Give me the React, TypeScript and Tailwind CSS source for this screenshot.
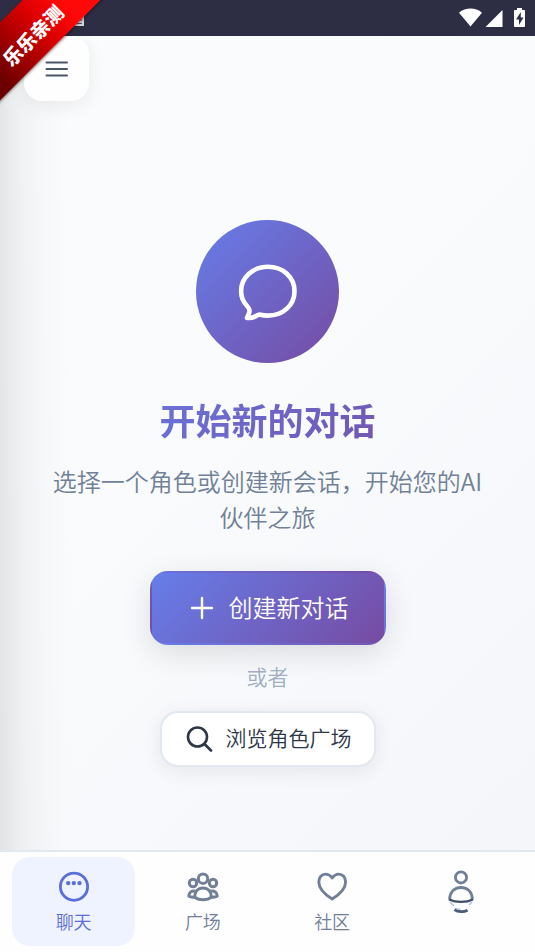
import type { ReactNode } from "react";

interface NavItem {
  label: string;
  icon: ReactNode;
  active?: boolean;
  hideLabel?: boolean;
}

const NAV_ITEMS: NavItem[] = [
  { label: "聊天", icon: <ChatIcon />, active: true },
  { label: "广场", icon: <PeopleIcon /> },
  { label: "社区", icon: <HeartIcon /> },
  { label: "我的", icon: <ProfileIcon />, hideLabel: true },
];

function ChatIcon() {
  return (
    <svg width="32" height="32" viewBox="0 0 32 32" aria-hidden="true">
      <circle cx="16" cy="15.7" r="13.6" fill="none" stroke="currentColor" strokeWidth="2.8" />
      <g fill="currentColor">
        <circle cx="10.2" cy="12.1" r="2.2" />
        <circle cx="15.8" cy="12.1" r="2.2" />
        <circle cx="21.5" cy="12.1" r="2.2" />
      </g>
    </svg>
  );
}

function PeopleIcon() {
  return (
    <svg width="32" height="32" viewBox="0 0 32 32" fill="none" stroke="currentColor" strokeWidth="3" strokeLinejoin="round" aria-hidden="true">
      <circle cx="16" cy="7.7" r="4.7" />
      <circle cx="6" cy="12" r="3.7" />
      <circle cx="26" cy="12" r="3.7" />
      <path d="M7.7 26.2C7.7 20.6 11 16.9 16 16.9s8.3 3.7 8.3 9.3c-2 1.8-5 2.6-8.3 2.6s-6.3-.8-8.3-2.6Z" />
      <path d="M8.6 20.2C4.6 19.2 2 21.5 1.8 25.1c1.7.9 3.7 1.3 5.9 1.3M23.4 20.2c4-1 6.6 1.3 6.8 4.9-1.7.9-3.7 1.3-5.9 1.3" />
    </svg>
  );
}

function HeartIcon() {
  return (
    <svg width="32" height="32" viewBox="0 0 32 32" fill="none" stroke="currentColor" strokeWidth="2.9" strokeLinejoin="round" aria-hidden="true">
      <path d="M16.2 7C14.3 4.2 12 3.1 9.7 3.1 5.7 3.1 2.8 6.4 2.8 11c0 7.2 6.8 12.9 13.4 17C22.8 23.9 29.6 18.2 29.6 11c0-4.6-2.9-7.9-6.9-7.9-2.3 0-4.6 1.1-6.5 3.9Z" />
    </svg>
  );
}

function ProfileIcon() {
  return (
    <svg width="32" height="46" viewBox="0 0 32 46" fill="none" strokeWidth="2.8" aria-hidden="true">
      <circle cx="16" cy="8.4" r="5.6" stroke="currentColor" />
      <path d="M4.6 30.5C4.6 23.5 9 18.5 16 18.5s11.4 5 11.4 12" stroke="currentColor" />
      <path d="M4 30.5c7 3.2 17 3.2 24 0" stroke="#3f4c6b" strokeWidth="2.2" />
      <path d="M5 32.8l4 4.2M27 32.8l-3 3.2" stroke="#b9c6e0" strokeWidth="1.8" />
      <path d="M9.5 40.6c3.5 2.7 9.5 2.7 13 .6" stroke="#4a5a78" strokeWidth="2.8" />
      <path d="M9.5 39.2c1.8.8 3.8 1 6 1" stroke="#9fb3d8" strokeWidth="1" />
    </svg>
  );
}

function StatusBar() {
  return (
    <div className="flex h-9 items-center justify-between bg-[#2d2d44] pr-2 pl-[72px] text-white">
      <svg width="12" height="14" viewBox="0 0 12 14" className="mt-1" aria-hidden="true">
        <path d="M0 1h12v12H0z" fill="#d4d4da" />
        <path d="M2 10.5h8M2 4h8M2 7h8" stroke="#55556a" strokeWidth="1" />
      </svg>
      <svg width="68" height="20" viewBox="0 0 68 20" fill="currentColor" aria-hidden="true">
        <path d="M0 4.8C6.5-.8 16.5-.8 23 4.8L11.5 18.5Z" />
        <path d="M43.5 2v17H26.5Z" />
        <path d="M58 0h5v2h2.2c.5 0 .8.3.8.8v15.4c0 .5-.3.8-.8.8h-9.400c-.5 0-.8-.3-.8-.8V2.8c0-.5.3-.8.8-.8H58Z" />
        <path d="M61.8 4 57 11.500h3v5.500l4.500-7.500h-2.700Z" fill="#2d2d44" />
      </svg>
    </div>
  );
}

// Corner ribbon, lies over the status bar and the menu button
function Ribbon() {
  return (
    <div className="pointer-events-none absolute top-0 left-0 size-[110px] overflow-hidden">
      <div className="absolute top-[3px] -left-[49px] flex h-[55px] w-[160px] -rotate-45 items-center justify-center bg-linear-to-r from-[#6b0000] from-15% via-[#d80000] via-55% to-[#ff0808] to-75% pt-2 pr-1 shadow-[0_1px_3px_rgba(0,0,0,0.5)]">
        <span className="text-[19px] leading-3 font-black text-white">乐乐亲测</span>
      </div>
    </div>
  );
}

function BottomNav() {
  return (
    <nav className="grid grid-cols-4 gap-1.5 border-t-2 border-[#e2e8f0] bg-[#fefefe] px-3 pt-[5px] pb-1.5">
      {NAV_ITEMS.map((item) => (
        <button
          key={item.label}
          type="button"
          aria-label={item.label}
          aria-current={item.active ? "page" : undefined}
          className={`flex h-[89px] flex-col items-center gap-1.5 rounded-[18px] ${item.hideLabel ? "pt-3" : "pt-3.5"} ${item.active ? "bg-[#eff3ff] text-[#5a6fd8]" : "text-[#718096]"}`}
        >
          {item.icon}
          {!item.hideLabel && <span className="text-lg leading-6 font-[350]">{item.label}</span>}
        </button>
      ))}
    </nav>
  );
}

export default function App() {
  return (
    <div className="relative flex min-h-screen flex-col bg-[#f8fafc] font-['Noto_Sans_CJK_SC',sans-serif]">
      <StatusBar />

      <div className="flex flex-1 flex-col bg-[linear-gradient(to_right,rgba(0,0,0,0.09),rgba(0,0,0,0.045)_20px,rgba(0,0,0,0.015)_42px,transparent_70px),linear-gradient(135deg,#fbfcfd,#f8fafc_50%,#f5f6fa)]">
        <header className="px-6 pb-9">
          <button
            type="button"
            aria-label="菜单"
            className="flex size-[65px] items-center justify-center rounded-[18px] bg-[#fefefe] text-[#4a5568] shadow-[0_4px_20px_rgba(0,0,0,0.08)]"
          >
            <svg width="24" height="24" viewBox="0 0 24 24" stroke="currentColor" strokeWidth="2" strokeLinecap="round" aria-hidden="true">
              <path d="M1.5 5.5H22M1.5 12H22M1.5 18.5H22" />
            </svg>
          </button>
        </header>

        <main className="flex flex-1 flex-col items-center px-12 pb-[83px]">
          <div className="mt-[83px] flex size-[143px] items-center justify-center rounded-full bg-[linear-gradient(135deg,#667eea,#764ba2)]">
            <svg width="62" height="62" viewBox="0 0 62 62" fill="none" stroke="white" strokeWidth="4.6" strokeLinejoin="round" aria-hidden="true">
              <path d="M23.5 53.7c2.5.8 5 .9 7.5.9C46 54.6 57.5 44.2 57.5 30.2 57.5 16.2 46 5.8 31 5.8S4.1 16.2 4.1 30.2c0 6 2.2 11 6.4 15.3 2 2.2 2.6 3.7 1.8 6l-2.3 5.4c3.5.4 6.5-.3 9-1.9 1.7-1.1 2.9-1.7 4.5-1.3Z" />
            </svg>
          </div>

          <h1 className="mt-8 w-full bg-[linear-gradient(135deg,#667eea,#764ba2)] bg-clip-text text-center text-4xl leading-[48px] font-bold text-transparent">
            开始新的对话
          </h1>
          <p className="mt-5 text-center text-2xl leading-9 font-[350] text-[#718096]">
            选择一个角色或创建新会话，开始您的AI伙伴之旅
          </p>

          <button
            type="button"
            className="mt-9 flex h-[74px] items-center gap-3 rounded-[18px] border-2 border-transparent bg-[linear-gradient(135deg,#667eea,#764ba2)] px-[35px] pb-0.5 text-2xl font-[350] text-white shadow-[0_8px_30px_rgba(0,0,0,0.12)]"
          >
            <svg width="30" height="30" viewBox="0 0 30 30" stroke="currentColor" strokeWidth="2.4" strokeLinecap="round" aria-hidden="true">
              <path d="M15 6v20M5 16h20" />
            </svg>
            创建新对话
          </button>
          <span className="mt-4 text-[21px] leading-[30px] font-[350] text-[#a0aec0]">或者</span>
          <button
            type="button"
            className="mt-5 flex h-14 items-center gap-3 rounded-[18px] border-2 border-[#e2e8f0] bg-white pr-[22px] pb-0.5 pl-6 text-[21px] font-[350] text-[#2d3748] shadow-[0_4px_20px_rgba(0,0,0,0.08)]"
          >
            <svg width="28" height="28" viewBox="0 0 28 28" fill="none" stroke="currentColor" strokeWidth="2.6" strokeLinecap="round" aria-hidden="true">
              <circle cx="11.5" cy="13" r="9.5" />
              <path d="M18.5 20 25 26.5" />
            </svg>
            浏览角色广场
          </button>
        </main>
      </div>

      <BottomNav />
      <Ribbon />
    </div>
  );
}
